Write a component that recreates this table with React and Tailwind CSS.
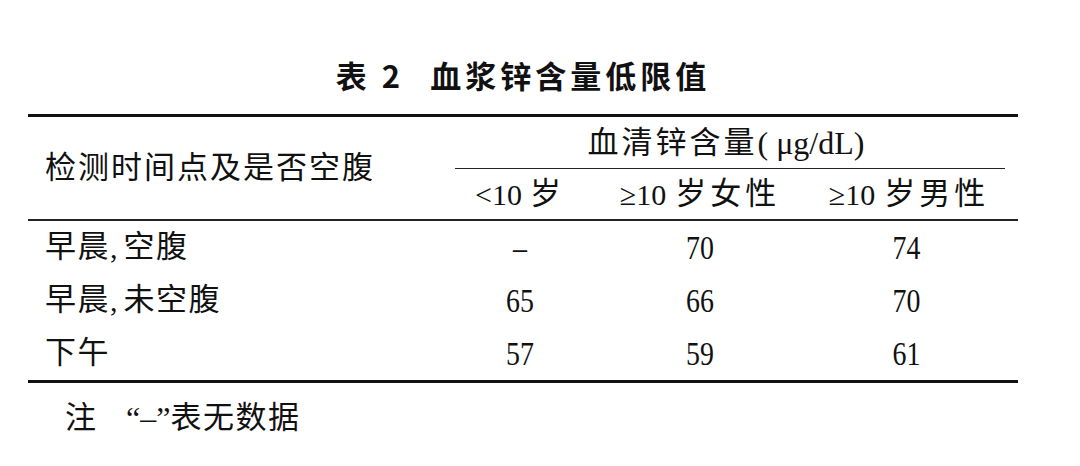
export default function App() {
  const serif = { fontFamily: '"Liberation Serif", "Noto Sans CJK SC", serif' };
  const rows = [
    ["早晨", "空腹", "–", "70", "74"],
    ["早晨", "未空腹", "65", "66", "70"],
    ["下午", null, "57", "59", "61"],
  ];
  return (
    <div className="w-[1080px] h-[466px] bg-white text-[#111] overflow-hidden">
      <div className="ml-[28px] w-[990px]" style={serif}>
        <div className="h-[114px] pt-[55px]">
          <div
            className="flex justify-center items-center gap-[26px] h-[40px] leading-[40px] text-[31px] font-bold tracking-[4px]"
            style={{ fontFamily: '"Noto Sans CJK SC", "Noto Sans", sans-serif' }}
          >
            <span>表 2</span>
            <span>血浆锌含量低限值</span>
          </div>
        </div>
        <div className="h-[3px] bg-[#111]" />
        <div className="grid grid-cols-[412px_160px_200px_218px] text-[31px]">
          <div className="row-span-2 flex items-center pl-[17px] tracking-[2px]">
            检测时间点及是否空腹
          </div>
          <div className="col-span-3 h-[52px] flex flex-col">
            <div className="flex-1 flex items-center justify-center pr-[6px] pt-[1px]">
              <span className="tracking-[3px]">血清锌含量</span>
              <span className="text-[32px]">( μg/dL)</span>
            </div>
            <div className="h-[1px] bg-[#222] ml-[15px] mr-[13px]" />
          </div>
          <div className="h-[50px] flex items-center justify-center pr-[4px]">
            <span className="text-[30px]">&lt;10</span>
            <span className="ml-[8px]">岁</span>
          </div>
          <div className="h-[50px] flex items-center justify-center">
            <span className="text-[30px]">≥10</span>
            <span className="ml-[9px] tracking-[4px]">岁女性</span>
          </div>
          <div className="h-[50px] flex items-center justify-center">
            <span className="text-[30px]">≥10</span>
            <span className="ml-[9px] tracking-[4px]">岁男性</span>
          </div>
        </div>
        <div className="h-[2px] bg-[#222]" />
        <div className="text-[31px]">
          {rows.map((r, i) => (
            <div key={i} className="grid grid-cols-[412px_160px_200px_218px] h-[53px] items-center">
              <div className="pl-[17px] flex items-center">
                <span className="tracking-[1.5px]">{r[0]}</span>
                {r[1] && (
                  <>
                    <span className="text-[30px] mr-[6px]">,</span>
                    <span className="tracking-[1.5px]">{r[1]}</span>
                  </>
                )}
              </div>
              <div className="text-center text-[34px] scale-x-[0.82]">{r[2]}</div>
              <div className="text-center text-[34px] scale-x-[0.82]">{r[3]}</div>
              <div className="text-center text-[34px] scale-x-[0.82] pr-[6px]">{r[4]}</div>
            </div>
          ))}
        </div>
        <div className="h-[3px] bg-[#111]" />
        <div className="h-[70px] flex items-center pl-[37px] text-[31px]">
          <span>注</span>
          <span className="ml-[30px] text-[32px]">“–”</span>
          <span className="tracking-[1.5px]">表无数据</span>
        </div>
      </div>
    </div>
  );
}
